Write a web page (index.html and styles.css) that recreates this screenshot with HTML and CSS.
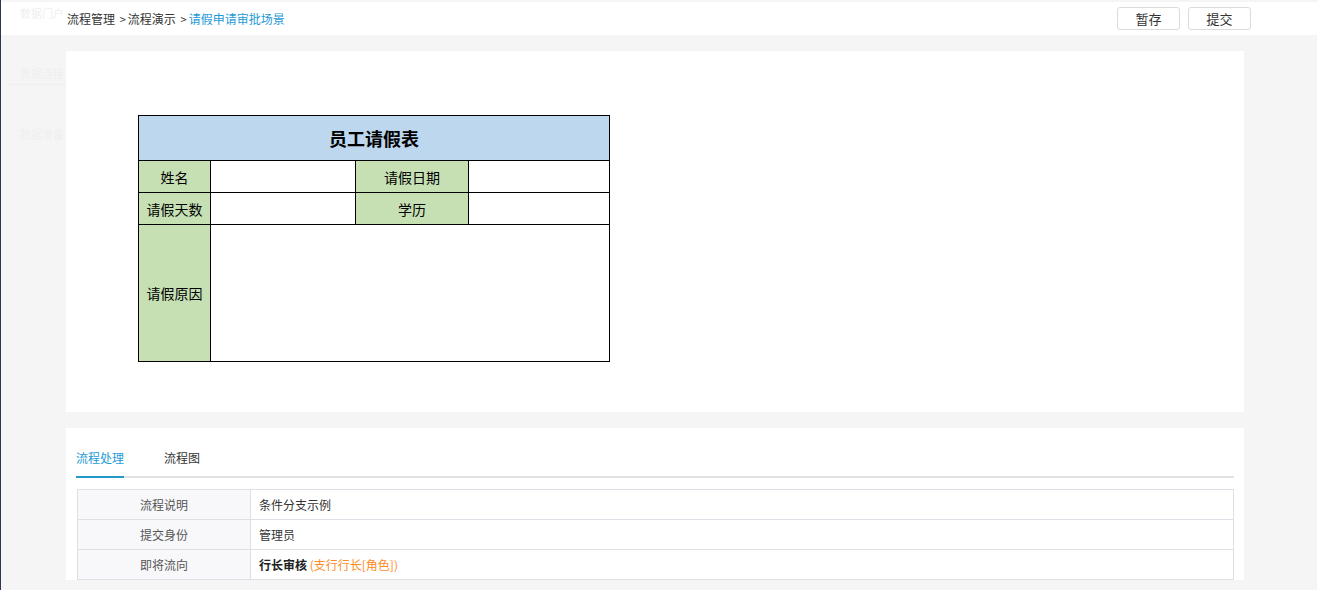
FILE: index.html
```html
<!DOCTYPE html>
<html lang="zh-CN">
<head>
  <meta charset="UTF-8">
  <title>请假申请审批场景</title>
  <link rel="stylesheet" href="styles.css">
</head>
<body>

<div class="page">
  <!-- faded menu of the page underneath -->
  <div class="ghost-menu">
    <div class="ghost-item first">数据门户</div>
    <div class="ghost-item second">数据连接</div>
    <div class="ghost-item third">数据准备</div>
  </div>

  <div class="topbar">
    <div class="crumbs">流程管理 <span class="sep">&gt;</span>流程演示 <span class="sep">&gt;</span><span class="current">请假申请审批场景</span></div>
    <div class="actions">
      <button class="btn">暂存</button>
      <button class="btn">提交</button>
    </div>
  </div>

  <div class="main">
    <div class="card form-card">
      <table class="leave-form">
        <tr class="title-row">
          <td colspan="4">员工请假表</td>
        </tr>
        <tr class="row">
          <td class="label col-a">姓名</td>
          <td class="col-b"></td>
          <td class="label col-c">请假日期</td>
          <td class="col-d"></td>
        </tr>
        <tr class="row">
          <td class="label">请假天数</td>
          <td></td>
          <td class="label">学历</td>
          <td></td>
        </tr>
        <tr class="reason-row">
          <td class="label">请假原因</td>
          <td colspan="3"></td>
        </tr>
      </table>
    </div>

    <div class="card flow-card">
      <div class="tabs">
        <div class="tab active">流程处理</div>
        <div class="tab">流程图</div>
      </div>
      <table class="info">
        <tr>
          <td class="key">流程说明</td>
          <td class="val">条件分支示例</td>
        </tr>
        <tr>
          <td class="key">提交身份</td>
          <td class="val">管理员</td>
        </tr>
        <tr>
          <td class="key">即将流向</td>
          <td class="val"><strong>行长审核</strong> <span class="role">(支行行长[角色])</span></td>
        </tr>
      </table>
    </div>
  </div>
</div>

</body>
</html>
```

FILE: styles.css
```css
html, body {
  margin: 0;
  padding: 0;
}

body {
  font-family: "Noto Sans CJK SC", "Noto Sans", sans-serif;
  font-size: 12px;
  color: #333;
  background: #f5f5f5;
}

.page {
  position: relative;
  height: 588px;
  border-left: 1px solid #2b3650;
  border-bottom: 2px solid #1f1f1f;
  padding-top: 2px;
  box-sizing: content-box;
  overflow: hidden;
}

.ghost-menu {
  position: absolute;
  left: 0;
  top: 0;
  width: 65px;
  z-index: 1;
  pointer-events: none;
}

.ghost-item {
  padding-left: 19px;
  font-size: 11px;
  line-height: 12px;
  color: #efefef;
  white-space: nowrap;
}

.ghost-item.first {
  padding-top: 7px;
  height: 60px;
}

.ghost-item.second {
  height: 17px;
  margin-left: 7px;
  padding-left: 12px;
  border-bottom: 1px solid #f0f0f0;
  margin-bottom: 43px;
}

.topbar {
  height: 33px;
  background: #fff;
  display: flex;
  align-items: center;
  justify-content: space-between;
  padding: 0 66px 0 66px;
}

.crumbs {
  font-size: 12px;
  line-height: 16px;
  color: #333;
  white-space: nowrap;
}

.crumbs .sep {
  font-size: 11px;
  margin-left: 2px;
  margin-right: 2px;
}

.crumbs .current {
  color: #1e9ad6;
}

.actions {
  display: flex;
  gap: 8px;
}

.btn {
  width: 63px;
  height: 23px;
  padding: 0;
  background: #fff;
  border: 1px solid #dcdcdc;
  border-radius: 3px;
  font-family: inherit;
  font-size: 13px;
  line-height: 21px;
  color: #333;
}

.main {
  padding: 16px 73px 0 65px;
}

.card {
  background: #fff;
}

.form-card {
  height: 361px;
  padding: 64px 0 0 72px;
  box-sizing: border-box;
}

.leave-form {
  border-collapse: collapse;
  width: 472px;
  font-size: 14px;
  color: #000;
}

.leave-form td {
  border: 1px solid #000;
  padding: 0;
  text-align: center;
}

.title-row td {
  height: 44px;
  background: #bdd7ee;
  font-size: 18px;
  font-weight: bold;
}

.row td {
  height: 31px;
}

.reason-row td {
  height: 136px;
}

.label {
  background: #c6e0b4;
}

.col-a { width: 71px; }
.col-b { width: 144px; }
.col-c { width: 112px; }

.flow-card {
  margin-top: 16px;
  height: 152px;
  padding: 0 10px;
  box-sizing: border-box;
}

.tabs {
  display: flex;
  gap: 40px;
  padding-top: 20px;
  border-bottom: 2px solid #e2e2e2;
}

.tab {
  font-size: 12px;
  line-height: 20px;
  padding-bottom: 8px;
  color: #333;
}

.tab.active {
  color: #1e9ad6;
  border-bottom: 2px solid #2399c7;
  margin-bottom: -2px;
}

.info {
  margin: 11px 0 0 1px;
  width: calc(100% - 1px);
  border-collapse: collapse;
  font-size: 12px;
}

.info td {
  height: 29px;
  border: 1px solid #e0dfe8;
  padding: 0;
}

.info .key {
  width: 172px;
  background: #f8f8fb;
  text-align: center;
  color: #555;
}

.info .val {
  padding-left: 8px;
  color: #333;
}

.info strong {
  color: #222;
}

.role {
  color: #ff8a1e;
}
```
